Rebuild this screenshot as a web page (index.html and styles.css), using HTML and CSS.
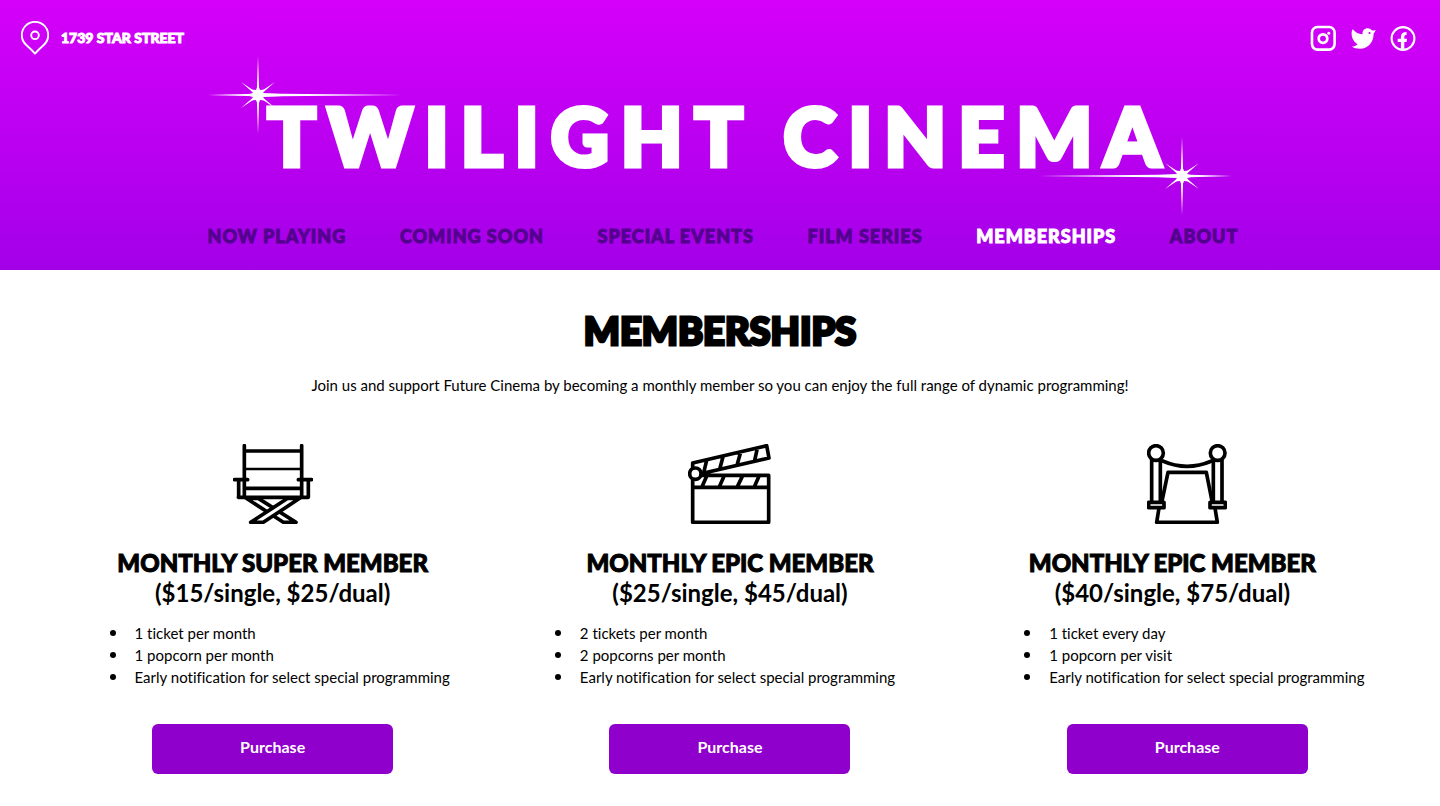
FILE: index.html
```html
<!DOCTYPE html>
<html lang="en">
<head>
<meta charset="utf-8">
<meta name="viewport" content="width=device-width, initial-scale=1">
<title>Memberships – Twilight Cinema</title>
<link rel="stylesheet" href="styles.css">
</head>
<body>
<header class="site-header">
  <div class="top-bar">
    <address class="location">
      <svg class="pin" viewBox="0 0 28 34" aria-hidden="true"><path d="M14 32.600C11.500 29.800 8.800 27.100 5.300 24A13.200 13.200 0 1 1 22.700 24C19.200 27.100 16.500 29.800 14 32.600Z" fill="none" stroke="currentColor" stroke-width="1.900" stroke-linejoin="round"/><circle cx="14" cy="14.300" r="3.800" fill="none" stroke="currentColor" stroke-width="1.900"/></svg>
      <span>1739 STAR STREET</span>
    </address>
    <nav class="social" aria-label="Social media">
      <a href="#" aria-label="Instagram"><svg viewBox="0 0 26 26"><rect x="2" y="2" width="22.600" height="22.600" rx="5.500" fill="none" stroke="currentColor" stroke-width="2.600"/><circle cx="13" cy="13.600" r="4.300" fill="none" stroke="currentColor" stroke-width="2.700"/><circle cx="18.700" cy="8.200" r="1.500" fill="currentColor"/></svg></a>
      <a href="#" aria-label="Twitter"><svg viewBox="0 0 26 26"><path d="M2.800 4.300C5.500 7.600 9 9.400 12.600 9.200C12.100 5.500 14.500 3.200 17.700 3.200C19.500 3.200 20.900 4 21.800 5.200C23 5.600 24.300 5.700 25.600 5.100C25.300 6.700 24.400 7.700 23.600 8.700C23.600 16.500 18.700 23.700 9.900 23.700C6.800 23.700 3.800 23.300 1.600 21.500C4 21.500 6.100 20.700 7.600 19.200C4.500 17.500 1.600 13.700 1.600 8.300C1.600 6.600 2.100 5.300 2.800 4.300Z" fill="currentColor"/><circle cx="19.500" cy="8" r="1.100" fill="#cc00f6"/></svg></a>
      <a href="#" aria-label="Facebook"><svg viewBox="0 0 26 26"><circle cx="13" cy="13.500" r="11.400" fill="none" stroke="currentColor" stroke-width="2.100"/><path d="M10.900 24V17H7.700V13.700H10.900V11.800C10.900 8.600 12.800 7 16.600 7V10.100C15 10.100 14.300 10.600 14.300 12V13.700H17L16.600 17H14.300V24Z" fill="currentColor"/></svg></a>
    </nav>
  </div>
  <div class="brand">
    <svg class="star star-start" viewBox="-50 -40 194 80" aria-hidden="true"><defs><g id="flare" fill="#fff"><path d="M-50 0L0-1.400L144 0L0 1.400ZM0-39L1.300 0L0 39L-1.300 0ZM-17-13L-1 1L17 13L1-1ZM-17 13L-1-1L17-13L1 1Z"/><path d="M0-10L2-5L7-5.500L5-2L24-1L24 1L5 2L7 5.500L2 5L0 10L-2 5L-7 5.500L-5 2L-12 0L-5-2L-7-5.500L-2-5Z"/></g></defs><use href="#flare"/></svg>
    <p class="wordmark">TWILIGHT CINEMA</p>
    <svg class="star star-end" viewBox="-144 -40 194 80" aria-hidden="true"><use href="#flare" transform="rotate(180)"/></svg>
  </div>
  <nav class="main-nav" aria-label="Main">
    <a href="#">NOW PLAYING</a>
    <a href="#">COMING SOON</a>
    <a href="#">SPECIAL EVENTS</a>
    <a href="#">FILM SERIES</a>
    <a href="#" class="current" aria-current="page">MEMBERSHIPS</a>
    <a href="#">ABOUT</a>
  </nav>
</header>
<main class="page">
  <h1 class="page-title">MEMBERSHIPS</h1>
  <p class="intro">Join us and support Future Cinema by becoming a monthly member so you can enjoy the full range of dynamic programming!</p>
  <div class="plans">
    <section class="plan">
      <svg class="plan-icon" viewBox="39 27 240 240" aria-hidden="true"><g class="lines"><path d="M79 190H115L228 262H190Z"/><path d="M239 190H203L92 262H130Z" fill="#fff"/><path d="M73 32V187M245 32V187M73 48H245M73 160H245M55 187H265M43 134H83M235 134H275M56 136V187M265 136V187"/><path d="M73 102H245" stroke-width="8"/></g></svg>
      <h2 class="plan-title">MONTHLY SUPER MEMBER <span class="price">($15/single, $25/dual)</span></h2>
      <ul class="perks"><li>1 ticket per month</li><li>1 popcorn per month</li><li>Early notification for select special programming</li></ul>
      <button class="purchase" type="button">Purchase</button>
    </section>
    <section class="plan plan-middle">
      <svg class="plan-icon" viewBox="42 27 249 240" aria-hidden="true"><g class="lines"><path d="M56 121H284V262H56ZM56 157H284M98 124L84 155M150 124L136 155M205 124L190 155M255 124L241 155M56 105V84L278 32L285 69L80 116M98 76L90 109M147 65L138 99M200 52L190 87M250 40L242 76"/><circle cx="64" cy="116" r="17" fill="#fff"/></g></svg>
      <h2 class="plan-title">MONTHLY EPIC MEMBER <span class="price">($25/single, $45/dual)</span></h2>
      <ul class="perks"><li>2 tickets per month</li><li>2 popcorns per month</li><li>Early notification for select special programming</li></ul>
      <button class="purchase" type="button">Purchase</button>
    </section>
    <section class="plan plan-last">
      <svg class="plan-icon" viewBox="48 27 240 240" aria-hidden="true"><g class="lines"><path d="M84 219L77 262H259L252 219M93 198L111 112H226L243 198M95 78Q168 110 242 78"/><circle cx="75" cy="54" r="22"/><circle cx="260" cy="54" r="22"/><path d="M62 76V202M88 76V202M247 76V202M273 76V202M53 202H99V218H53ZM237 202H283V218H237Z"/></g></svg>
      <h2 class="plan-title">MONTHLY EPIC MEMBER <span class="price">($40/single, $75/dual)</span></h2>
      <ul class="perks"><li>1 ticket every day</li><li>1 popcorn per visit</li><li>Early notification for select special programming</li></ul>
      <button class="purchase" type="button">Purchase</button>
    </section>
  </div>
</main>
</body>
</html>
```
FILE: styles.css
```css
* { box-sizing: border-box; }

body {
  margin: 0;
  background: #fff;
  color: #000;
  font-family: Lato, "Open Sans", sans-serif;
  font-size: 15px;
  line-height: 22px;
  font-variant-ligatures: none;
}

a { color: inherit; text-decoration: none; }

.site-header {
  padding-bottom: 22px;
  background: linear-gradient(#d500f9, #a300e8);
  color: #fff;
}

.top-bar {
  display: flex;
  justify-content: space-between;
  align-items: center;
  padding: 21px 24px 0 21px;
}

.location {
  display: flex;
  align-items: center;
  gap: 12px;
  font-size: 14px;
  font-weight: 900;
  font-style: normal;
  -webkit-text-stroke: 1px currentColor;
}

.pin { width: 28px; height: 34px; }

.social { display: flex; gap: 14px; }
.social a { display: block; height: 26px; }
.social svg { display: block; width: 26px; height: 26px; }

.brand {
  position: relative;
  width: 72%;
  margin: 0 auto;
  padding: 30px 0 39px;
}

.wordmark {
  margin: 0;
  font-size: 80px;
  font-weight: 900;
  line-height: 100px;
  letter-spacing: 12px;
  text-align: center;
  white-space: nowrap;
  -webkit-text-stroke: 5px currentColor;
}

.star { position: absolute; width: 194px; height: 80px; }
.star-start { left: 6px; top: 0; }
.star-end { right: 6px; bottom: 8px; }

.main-nav {
  display: flex;
  justify-content: space-between;
  width: 72%;
  margin: 0 auto;
  padding: 0 0 0 6px;
  color: #54008f;
  font-size: 18px;
  font-weight: 900;
  line-height: 24px;
  letter-spacing: 1px;
  -webkit-text-stroke: 1px currentColor;
}

.main-nav .current { color: #fff; }

.page { padding: 36px 24px 32px; }

.page-title {
  margin: 0;
  font-size: 38px;
  font-weight: 900;
  line-height: 48px;
  text-align: center;
  -webkit-text-stroke: 3px currentColor;
}

.intro { margin: 20px 0 48px; text-align: center; }

.plans {
  display: grid;
  grid-template-columns: repeat(3, 1fr);
  padding-left: 20px;
}

.plan {
  display: flex;
  flex-direction: column;
  align-items: center;
}

.plan-icon { height: 80px; }

.lines {
  fill: none;
  stroke: #000;
  stroke-width: 11;
  stroke-linecap: round;
  stroke-linejoin: round;
}

.plan-title {
  margin: 24px 0 14px;
  font-size: 24px;
  font-weight: 900;
  line-height: 30px;
  text-align: center;
  -webkit-text-stroke: 1px currentColor;
}

.plan-last .plan-title { padding-right: 30px; }

.price {
  display: block;
  font-weight: 700;
  -webkit-text-stroke: 0;
}

.perks {
  margin: 0;
  padding: 0 0 0 14px;
  list-style: none;
}

.plan-middle .perks { padding: 0 10px 0 0; }

.perks li {
  display: flex;
  align-items: center;
  gap: 19px;
}

.perks li::before {
  content: "";
  width: 6px;
  height: 6px;
  border-radius: 50%;
  background: currentColor;
}

.purchase {
  width: 241px;
  height: 50px;
  margin-top: 36px;
  padding: 0 0 4px;
  border: 0;
  border-radius: 6px;
  background: #8f00cc;
  color: #fff;
  font: 700 16px/20px Lato, "Open Sans", sans-serif;
}
```
